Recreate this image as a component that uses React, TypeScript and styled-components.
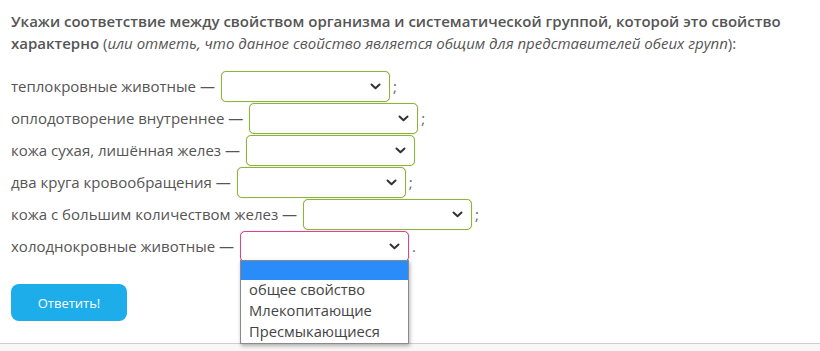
import React from "react";
import styled, { createGlobalStyle } from "styled-components";

const Global = createGlobalStyle`
  html, body { margin: 0; padding: 0; background: #fff; }
  body { font-family: "Open Sans", "Noto Sans", sans-serif; color: #555; }
`;

const Page = styled.div`
  width: 820px;
  height: 351px;
  box-sizing: border-box;
  display: flex;
  flex-direction: column;
  overflow: hidden;
`;

const Content = styled.div`
  padding: 10px 11px 0 11px;
  display: flex;
  flex-direction: column;
`;

const Title = styled.div`
  font-size: 15px;
  line-height: 22px;
  font-weight: 600;
  color: #555;
  em {
    font-weight: 400;
    font-style: italic;
  }
  span { font-weight: 400; }
`;

const Rows = styled.div`
  margin-top: 16px;
  display: flex;
  flex-direction: column;
`;

const Row = styled.div`
  display: flex;
  align-items: center;
  height: 32px;
  font-size: 15px;
  color: #555;
`;

const Label = styled.span`
  white-space: nowrap;
`;

const SelectBox = styled.div<{ $open?: boolean }>`
  position: relative;
  box-sizing: border-box;
  width: 169px;
  height: 31px;
  margin-left: 6px;
  border: 1px solid ${(p) => (p.$open ? "#d6478a" : "#8cb33a")};
  border-radius: 5px;
  box-shadow: 0 0 1px ${(p) => (p.$open ? "#e07aa8" : "#a8c86a")};
  background: #fff;
  display: flex;
  align-items: center;
  justify-content: flex-end;
  padding-right: 8px;
`;

const Chevron = styled.svg`
  width: 11px;
  height: 7px;
`;

const Punct = styled.span`
  margin-left: 3px;
  color: #666;
`;

const Dropdown = styled.div`
  position: absolute;
  top: 28px;
  left: -1px;
  width: 169px;
  box-sizing: border-box;
  background: #fff;
  border: 1px solid #8a8a8a;
  box-shadow: 1px 2px 4px rgba(0, 0, 0, 0.3);
  z-index: 5;
`;

const Option = styled.div<{ $active?: boolean }>`
  height: ${(p) => (p.$active ? "19px" : "21px")};
  line-height: 18px;
  padding-left: 8px;
  font-size: 14.7px;
  color: #444;
  background: ${(p) => (p.$active ? "#2a8cf9" : "#fff")};
  white-space: nowrap;
`;

const Button = styled.button`
  margin-top: 22px;
  width: 116px;
  height: 37px;
  border: none;
  border-radius: 8px;
  background: #1dadea;
  color: #fff;
  font-family: "Open Sans", "Noto Sans", sans-serif;
  font-size: 13px;
  padding: 0;
  cursor: pointer;
`;

const Footer = styled.div`
  margin-top: auto;
  height: 7px;
  border-top: 1px solid #cfcfcf;
  background: #f7f7f7;
`;

const ChevronIcon = () => (
  <Chevron viewBox="0 0 11 7">
    <path d="M1.5 1.5 L5.5 5.3 L9.5 1.5" fill="none" stroke="#333" strokeWidth="2" strokeLinecap="round" strokeLinejoin="round" />
  </Chevron>
);

const rows: { label: string; punct: string; open?: boolean }[] = [
  { label: "теплокровные животные —", punct: ";" },
  { label: "оплодотворение внутреннее —", punct: ";" },
  { label: "кожа сухая, лишённая желез —", punct: "" },
  { label: "два круга кровообращения —", punct: ";" },
  { label: "кожа с большим количеством желез —", punct: ";" },
  { label: "холоднокровные животные —", punct: ".", open: true },
];

export default function App() {
  return (
    <>
      <Global />
      <Page>
        <Content>
          <Title>
            Укажи соответствие между свойством организма и систематической группой, которой это свойство
            характерно <span>(</span>
            <em>или отметь, что данное свойство является общим для представителей обеих групп</em>
            <span>):</span>
          </Title>
          <Rows>
            {rows.map((r, i) => (
              <Row key={i}>
                <Label>{r.label}</Label>
                <SelectBox $open={r.open}>
                  <ChevronIcon />
                  {r.open && (
                    <Dropdown>
                      <Option $active />
                      <Option>общее свойство</Option>
                      <Option>Млекопитающие</Option>
                      <Option>Пресмыкающиеся</Option>
                    </Dropdown>
                  )}
                </SelectBox>
                {r.punct && <Punct>{r.punct}</Punct>}
              </Row>
            ))}
          </Rows>
          <div>
            <Button>Ответить!</Button>
          </div>
        </Content>
        <Footer />
      </Page>
    </>
  );
}
